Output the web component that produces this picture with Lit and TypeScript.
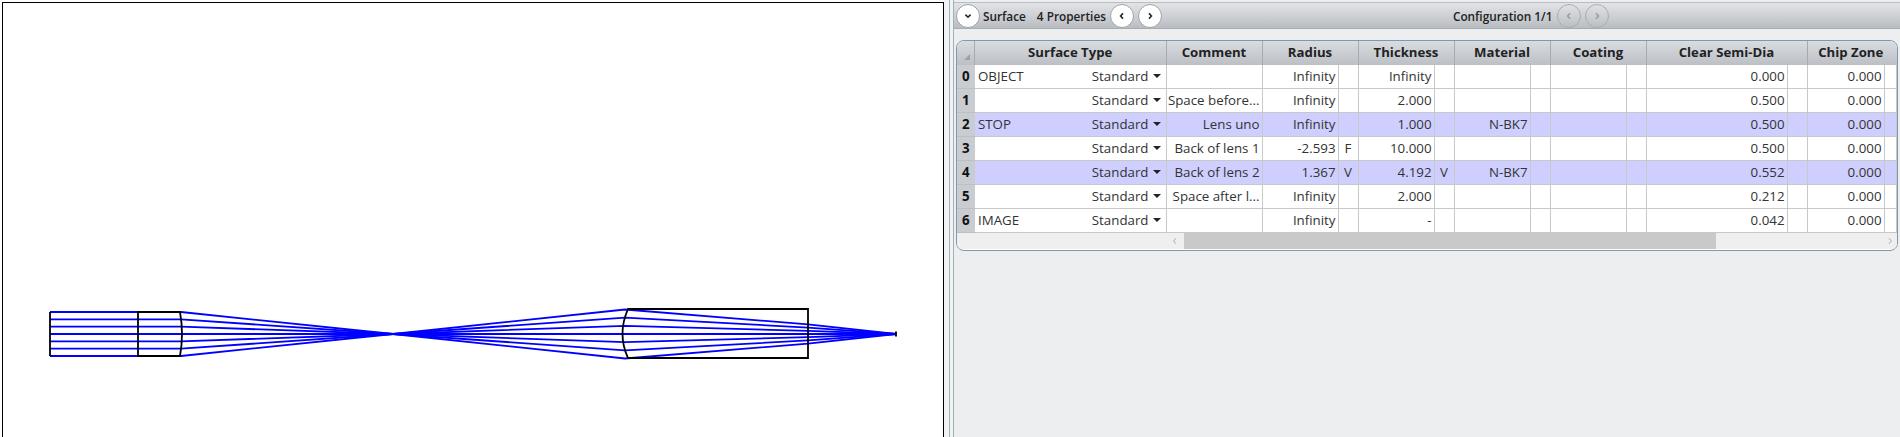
import { LitElement, css, html, svg } from "lit";
import { customElement } from "lit/decorators.js";

type Row = {
  n: number;
  label: string;
  comment: string;
  radius: string;
  rSolve: string;
  thick: string;
  tSolve: string;
  material: string;
  semi: string;
  hi?: boolean;
};

const ROWS: Row[] = [
  { n: 0, label: "OBJECT", comment: "", radius: "Infinity", rSolve: "", thick: "Infinity", tSolve: "", material: "", semi: "0.000" },
  { n: 1, label: "", comment: "Space before...", radius: "Infinity", rSolve: "", thick: "2.000", tSolve: "", material: "", semi: "0.500" },
  { n: 2, label: "STOP", comment: "Lens uno", radius: "Infinity", rSolve: "", thick: "1.000", tSolve: "", material: "N-BK7", semi: "0.500", hi: true },
  { n: 3, label: "", comment: "Back of lens 1", radius: "-2.593", rSolve: "F", thick: "10.000", tSolve: "", material: "", semi: "0.500" },
  { n: 4, label: "", comment: "Back of lens 2", radius: "1.367", rSolve: "V", thick: "4.192", tSolve: "V", material: "N-BK7", semi: "0.552", hi: true },
  { n: 5, label: "", comment: "Space after l...", radius: "Infinity", rSolve: "", thick: "2.000", tSolve: "", material: "", semi: "0.212" },
  { n: 6, label: "IMAGE", comment: "", radius: "Infinity", rSolve: "", thick: "-", tSolve: "", material: "", semi: "0.042" },
];

const chevron = (d: string, stroke = "#222", width = 1.6) => html`<svg width="10" height="10" viewBox="0 0 10 10">
  <path d=${d} fill="none" stroke=${stroke} stroke-width=${width}></path>
</svg>`;

const DOWN = "M2.4 3.6 L5 6.2 L7.6 3.6";
const LEFT = "M6 2.2 L3.6 5 L6 7.8";
const RIGHT = "M4 2.2 L6.4 5 L4 7.8";

@customElement("app-root")
export class AppRoot extends LitElement {
  static styles = css`
    :host {
      display: block;
      width: 1900px;
      height: 437px;
      overflow: hidden;
      background: #fff;
      font-family: "Open Sans", "Noto Sans", sans-serif;
      font-size: 13.3px;
      color: #222;
    }
    .page {
      display: grid;
      grid-template-columns: 944px 1fr;
      height: 437px;
    }
    .plot {
      margin: 2px 0 0 2px;
      background: #fff;
      border: solid #000;
      border-width: 1px 1px 0 1px;
      box-sizing: border-box;
      height: 435px;
    }
    .plot svg {
      display: block;
    }
    .side {
      display: flex;
      flex-direction: column;
      padding-left: 5px;
      background: #f1f2f3;
    }
    .inner {
      flex: 1;
      display: flex;
      border-left: 1px solid #a9afb5;
      padding-left: 3px;
    }
    .main {
      flex: 1;
      min-width: 0;
      border-left: 1px solid #9fb0bf;
      background: #eceef0;
      display: flex;
      flex-direction: column;
    }
    .toolbar {
      margin-top: 2px;
      height: 27px;
      box-sizing: border-box;
      border-top: 1px solid #b9bdc1;
      border-bottom: 1px solid #a7acb1;
      background: linear-gradient(#e2e4e7, #b9bdc2);
      display: flex;
      align-items: center;
      padding: 0 0 0 2px;
      font-weight: 600;
      font-size: 11.8px;
    }
    .round {
      width: 24px;
      height: 24px;
      box-sizing: border-box;
      border-radius: 50%;
      border: 1px solid #9ea3a8;
      background: #fff;
      display: flex;
      align-items: center;
      justify-content: center;
      flex: none;
    }
    .round.off {
      background: transparent;
      border-color: #a9adb2;
    }
    .surface {
      margin-left: 3px;
    }
    .props {
      margin-left: 11px;
      margin-right: 4px;
    }
    .small + .small {
      margin-left: 4px;
    }
    .config {
      margin-left: 291px;
      margin-right: 5px;
    }
    .grid-wrap {
      margin: 11px 2px 0 2px;
      height: 211px;
      box-sizing: border-box;
      border: 1px solid #7f98ad;
      border-radius: 8px;
      overflow: hidden;
      background: #fff;
    }
    .grid {
      display: grid;
      grid-template-columns: 18px 191.5px 96px 76px 20px 76px 20px 76px 20px 76px 20px 141px 20px 77px 1fr;
      grid-auto-rows: 24px;
    }
    .head {
      height: 24px;
      box-sizing: border-box;
      background: linear-gradient(#d9dce0, #bcc0c5);
      border-right: 1px solid #a5aaaf;
      display: flex;
      align-items: center;
      justify-content: center;
      font-weight: 700;
      font-size: 13.2px;
      padding-bottom: 2px;
    }
    .head.wide {
      grid-column: span 2;
    }
    .head.last {
      grid-column: span 2;
      border-right: 0;
      padding-right: 3px;
    }
    .corner {
      align-items: flex-end;
      justify-content: flex-start;
      padding: 0 0 4px 6px;
    }
    .cell {
      box-sizing: border-box;
      height: 24px;
      border-right: 1px solid #c8c8c8;
      border-bottom: 1px solid #c8c8c8;
      padding: 0 2px 1px;
      display: flex;
      align-items: center;
      justify-content: flex-end;
      white-space: nowrap;
      overflow: hidden;
      color: #333;
    }
    .hi {
      background: #cfcfff;
    }
    .num {
      background: #c9ccd0;
      justify-content: flex-start;
      font-weight: 700;
      padding-left: 5px;
      color: #111;
      border-right: 0;
      border-bottom: 1px solid #bdbfc2;
    }
    .stype {
      justify-content: space-between;
      padding: 0 5px 1px 3px;
    }
    .stype .pick {
      display: inline-flex;
      align-items: center;
      gap: 4px;
    }
    .caret {
      width: 0;
      height: 0;
      border: 4px solid transparent;
      border-top: 4px solid #222;
      border-bottom: 0;
    }
    .solve {
      justify-content: center;
      padding: 0 0 1px;
    }
    .scroll {
      display: grid;
      grid-template-columns: 227px 532px 1fr;
      height: 16px;
      background: #efefef;
    }
    .scroll .lead {
      display: flex;
      justify-content: flex-end;
      align-items: center;
      padding-right: 4px;
    }
    .scroll .tail {
      display: flex;
      justify-content: flex-end;
      align-items: center;
      padding-right: 2px;
    }
    .thumb {
      background: #c9c9c9;
    }
  `;

  private renderPlot() {
    const hs = [-3, -2, -1, 0, 1, 2, 3];
    // one polyline per ray, traced through both lenses to the image point
    const rays = hs.map((h) => {
      const y = (v: number) => 334 + (h / 3) * v;
      const pts = [
        [50, y(22)],
        [181, y(22)],
        [393, 334],
        [625, y(-24.5)],
        [808, y(-9.6)],
        [896, 334],
      ];
      return svg`<polyline points=${pts.map((p) => p.join(",")).join(" ")} fill="none" stroke="#0000ff" stroke-width="1.8"></polyline>`;
    });
    return html`<svg width="940" height="434" viewBox="3 3 940 434">
      ${rays}
      <g fill="none" stroke="#000" stroke-width="1.8">
        <path d="M50 312 V356"></path>
        <path d="M138 312 H180 Q184 334 180 356 H138 Z"></path>
        <path d="M628 309 H808 V358 H628 Q617 334 628 309 Z"></path>
        <path d="M896 331.5 V336.5"></path>
      </g>
    </svg>`;
  }

  private renderRow(r: Row) {
    const hi = r.hi ? "hi" : "";
    return html`
      <div class="cell num">${r.n}</div>
      <div class="cell stype ${hi}">
        <span>${r.label}</span>
        <span class="pick">Standard <i class="caret"></i></span>
      </div>
      <div class="cell ${hi}">${r.comment}</div>
      <div class="cell ${hi}">${r.radius}</div>
      <div class="cell solve ${hi}">${r.rSolve}</div>
      <div class="cell ${hi}">${r.thick}</div>
      <div class="cell solve ${hi}">${r.tSolve}</div>
      <div class="cell ${hi}">${r.material}</div>
      <div class="cell ${hi}"></div>
      <div class="cell ${hi}"></div>
      <div class="cell ${hi}"></div>
      <div class="cell ${hi}">${r.semi}</div>
      <div class="cell ${hi}"></div>
      <div class="cell ${hi}">0.000</div>
      <div class="cell ${hi}"></div>
    `;
  }

  render() {
    return html`
      <div class="page">
        <div class="plot">${this.renderPlot()}</div>
        <div class="side">
          <div class="inner">
            <div class="main">
              <div class="toolbar">
                <span class="round">${chevron(DOWN)}</span>
                <span class="surface">Surface</span>
                <span class="props">4 Properties</span>
                <span class="round small">${chevron(LEFT)}</span>
                <span class="round small">${chevron(RIGHT)}</span>
                <span class="config">Configuration 1/1</span>
                <span class="round small off">${chevron(LEFT, "#9a9ea3")}</span>
                <span class="round small off">${chevron(RIGHT, "#9a9ea3")}</span>
              </div>
              <div class="grid-wrap">
                <div class="grid">
                  <div class="head corner">
                    <svg width="8" height="8" viewBox="0 0 8 8"><path d="M7 1 V7 H1 Z" fill="#9ea3a8"></path></svg>
                  </div>
                  <div class="head">Surface Type</div>
                  <div class="head">Comment</div>
                  <div class="head wide">Radius</div>
                  <div class="head wide">Thickness</div>
                  <div class="head wide">Material</div>
                  <div class="head wide">Coating</div>
                  <div class="head wide">Clear Semi-Dia</div>
                  <div class="head last">Chip Zone</div>
                  ${ROWS.map((r) => this.renderRow(r))}
                </div>
                <div class="scroll">
                  <span class="lead">${chevron(LEFT, "#a8a8a8", 1)}</span>
                  <span class="thumb"></span>
                  <span class="tail">${chevron(RIGHT, "#a8a8a8", 1)}</span>
                </div>
              </div>
            </div>
          </div>
        </div>
      </div>
    `;
  }
}
